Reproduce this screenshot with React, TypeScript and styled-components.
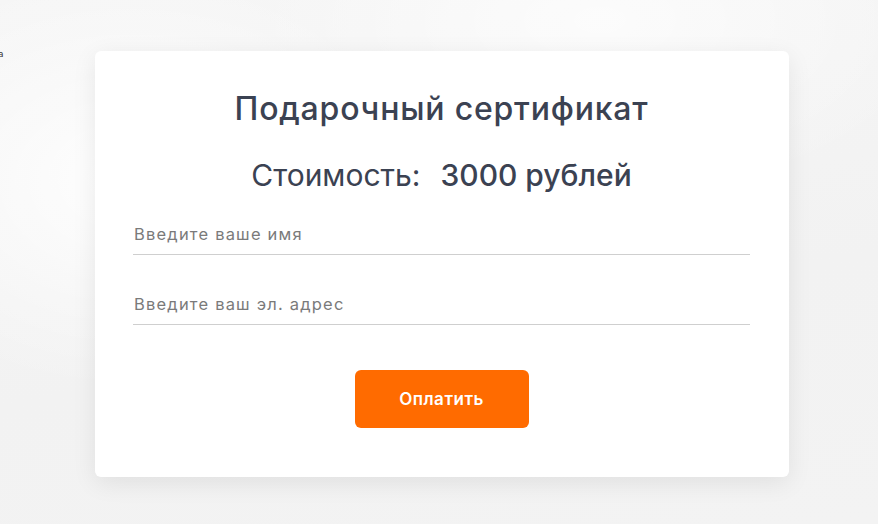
import React from "react";
import styled, { createGlobalStyle } from "styled-components";

const Global = createGlobalStyle`
  html, body { margin: 0; padding: 0; }
  body {
    font-family: Inter, "Open Sans", sans-serif;
    background:
      radial-gradient(ellipse 420px 300px at 130px 180px, rgba(255,255,255,0.9), rgba(255,255,255,0) 70%),
      radial-gradient(ellipse 500px 260px at 600px 20px, rgba(255,255,255,0.7), rgba(255,255,255,0) 70%),
      linear-gradient(170deg, #f6f6f6 0%, #f2f2f2 60%, #f3f3f3 100%);
    min-height: 524px;
    overflow: hidden;
  }
`;

const Page = styled.div`
  position: relative;
  width: 878px;
  height: 524px;
  padding: 51px 0 0 95px;
  box-sizing: border-box;
`;

const Stray = styled.span`
  position: absolute;
  left: -2px;
  top: 49px;
  font-size: 9px;
  color: #333;
  font-family: "DejaVu Sans", sans-serif;
`;

const Card = styled.div`
  width: 694px;
  height: 426px;
  box-sizing: border-box;
  background: #fff;
  border-radius: 6px;
  box-shadow: 0 6px 24px rgba(0, 0, 0, 0.08);
  padding: 38px 39px 0 38px;
  display: flex;
  flex-direction: column;
  align-items: center;
  color: #3b4252;
`;

const Title = styled.h1`
  margin: 0;
  font-size: 32px;
  line-height: 40px;
  font-weight: 500;
  letter-spacing: 0.8px;
`;

const Price = styled.div`
  margin-top: 28px;
  font-size: 30px;
  line-height: 36px;
  display: flex;
  gap: 20px;
`;

const PriceLabel = styled.span`
  font-weight: 400;
`;

const PriceValue = styled.span`
  font-weight: 500;
`;

const Form = styled.form`
  width: 100%;
  margin-top: 22px;
  display: flex;
  flex-direction: column;
  gap: 30px;
  align-items: center;
`;

const Input = styled.input`
  width: 100%;
  box-sizing: border-box;
  height: 40px;
  border: none;
  border-bottom: 1px solid #cfcfcf;
  outline: none;
  padding: 0 0 2px 1px;
  font-family: inherit;
  font-size: 16.5px;
  letter-spacing: 1.2px;
  color: #333;
  background: transparent;
  &::placeholder { color: #7a7a7a; }
`;

const PayButton = styled.button`
  margin-top: 15px;
  width: 174px;
  height: 58px;
  border: none;
  border-radius: 6px;
  background: #ff6b00;
  color: #fff;
  font-family: inherit;
  font-size: 17px;
  font-weight: 600;
  letter-spacing: 0.5px;
  cursor: pointer;
`;

export default function App() {
  return (
    <>
      <Global />
      <Page>
        <Stray>а</Stray>
        <Card>
          <Title>Подарочный сертификат</Title>
          <Price>
            <PriceLabel>Стоимость:</PriceLabel>
            <PriceValue>3000 рублей</PriceValue>
          </Price>
          <Form onSubmit={(e) => e.preventDefault()}>
            <Input placeholder="Введите ваше имя" />
            <Input placeholder="Введите ваш эл. адрес" />
            <PayButton type="submit">Оплатить</PayButton>
          </Form>
        </Card>
      </Page>
    </>
  );
}
